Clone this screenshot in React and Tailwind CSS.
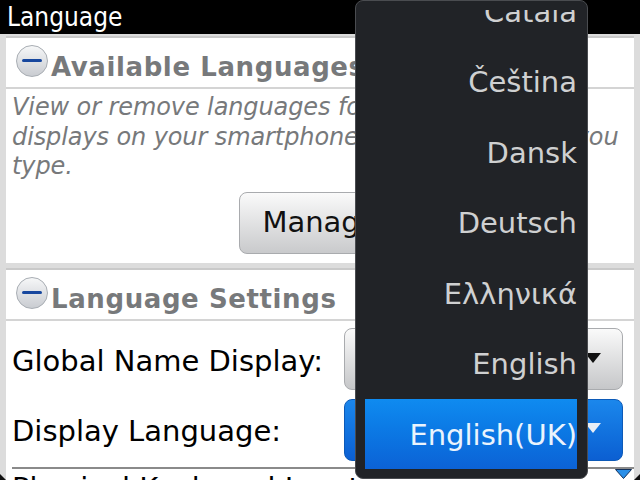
const FONT = "font-['DejaVu_Sans','Liberation_Sans',sans-serif]";

const LANGUAGES = ["Català", "Čeština", "Dansk", "Deutsch", "Ελληνικά", "English", "English(UK)"];

function MinusIcon() {
  return (
    <div className="w-8 h-8 shrink-0 mb-[4px] rounded-full border border-[#a8adb3] bg-gradient-to-b from-[#f6f7f8] to-[#c9ccd1] flex items-center justify-center">
      <div className="w-[20px] h-[3px] rounded-sm bg-[#17479e]" />
    </div>
  );
}

function SectionHeader({ title }) {
  return (
    <div className="h-[51px] flex items-center gap-[3px] pl-[10px] border-b-2 border-[#d4d4d4]">
      <MinusIcon />
      <span className="mt-[10px] text-[26px] font-bold text-[#77797b] tracking-[0.6px] whitespace-nowrap">{title}</span>
    </div>
  );
}

function SelectRow({ label, active }) {
  return (
    <div className="h-[70.5px] flex items-center pl-[6px] pr-[11px]">
      <span className="flex-1 mt-[4px] text-[29px] text-black whitespace-nowrap">{label}</span>
      <div
        className={
          "w-[279px] h-[62px] rounded-lg flex items-center justify-end pr-[21px] pb-[3px] border " +
          (active
            ? "bg-gradient-to-b from-[#1b87ec] to-[#0c5fd2] border-[#0c5ab8]"
            : "bg-gradient-to-b from-[#fafafa] to-[#c6c7c9] border-[#a9abae]")
        }
      >
        <svg width="16" height="10" viewBox="0 0 16 10">
          <path d="M0 0h16L8 10z" fill={active ? "#e8eef6" : "#111"} />
        </svg>
      </div>
    </div>
  );
}

export default function App() {
  return (
    <div className={"relative w-[640px] h-[480px] overflow-hidden bg-[#dcdcdc] " + FONT}>
      {/* Title bar */}
      <div className="h-[34px] bg-black text-white font-['DejaVu_Sans_Condensed','DejaVu_Sans',sans-serif] text-[26px] leading-[34px] pl-[7px]">Language</div>

      <div className="pt-[2px] px-[6px] flex flex-col gap-[5px]">
        {/* Available Languages */}
        <div className="h-[227px] shrink-0 bg-white border-t-2 border-[#c9c9c9]">
          <SectionHeader title="Available Languages" />
          <div className="pl-[6px] pt-[4px] text-[24px] leading-[29.5px] italic text-[#77797b] tracking-[-0.1px] whitespace-nowrap">
            <div>View or remove languages for the text that</div>
            <div>displays on your smartphone<span className="tracking-[-0.6px]"> and the language </span>you</div>
            <div>type.</div>
          </div>
          <div className="flex justify-center mt-[10px]">
            <div className="w-[162px] h-[62px] pt-px rounded-lg border border-[#a9abae] bg-gradient-to-b from-[#fafafa] to-[#c9cacc] text-[29px] text-[#111] flex items-center justify-center">
              Manage
            </div>
          </div>
        </div>

        {/* Language Settings */}
        <div className="h-[300px] shrink-0 bg-white border-t-2 border-[#c9c9c9]">
          <SectionHeader title="Language Settings" />
          <div className="pt-[3px]">
            <SelectRow label="Global Name Display:" />
            <SelectRow label="Display Language:" active />
          </div>
          <div className="ml-[6px] mt-[2px] border-t-2 border-[#8a8a8a] pt-[2px] text-[29px] leading-[34px] text-black whitespace-nowrap">
            Physical Keyboard Input
          </div>
        </div>
      </div>

      {/* Scroll arrow */}
      <svg className="absolute left-[615px] top-[469px]" width="17" height="10" viewBox="0 0 17 10">
        <path d="M0.5 0.5h16L8.5 9.5z" fill="#2a8fe8" stroke="#12305a" />
      </svg>

      {/* Screen corners */}
      <svg className="absolute left-0 bottom-0" width="6" height="6" viewBox="0 0 6 6">
        <path d="M0 0L6 6H0z" fill="#111" />
      </svg>
      <svg className="absolute right-0 bottom-0" width="6" height="6" viewBox="0 0 6 6">
        <path d="M6 0L0 6H6z" fill="#111" />
      </svg>

      {/* Language dropdown */}
      <div className="absolute left-[355px] top-0 w-[233px] h-[479px] bg-[#212327] rounded-lg border border-[#4a4c50] pl-[9px] pr-[10px] py-[9px]">
        <div className="h-full overflow-hidden flex flex-col justify-end">
          {LANGUAGES.map((lang) => {
            const selected = lang === "English(UK)";
            return (
              <div
                key={lang}
                className={
                  "h-[70.5px] shrink-0 flex items-center justify-end text-[29px] pt-[3px] " +
                  (selected
                    ? "bg-gradient-to-b from-[#0f8bf0] to-[#0c62d6] text-[#eaf4fd]"
                    : "text-[#cfd0d1]")
                }
              >
                {lang}
              </div>
            );
          })}
        </div>
      </div>
    </div>
  );
}
